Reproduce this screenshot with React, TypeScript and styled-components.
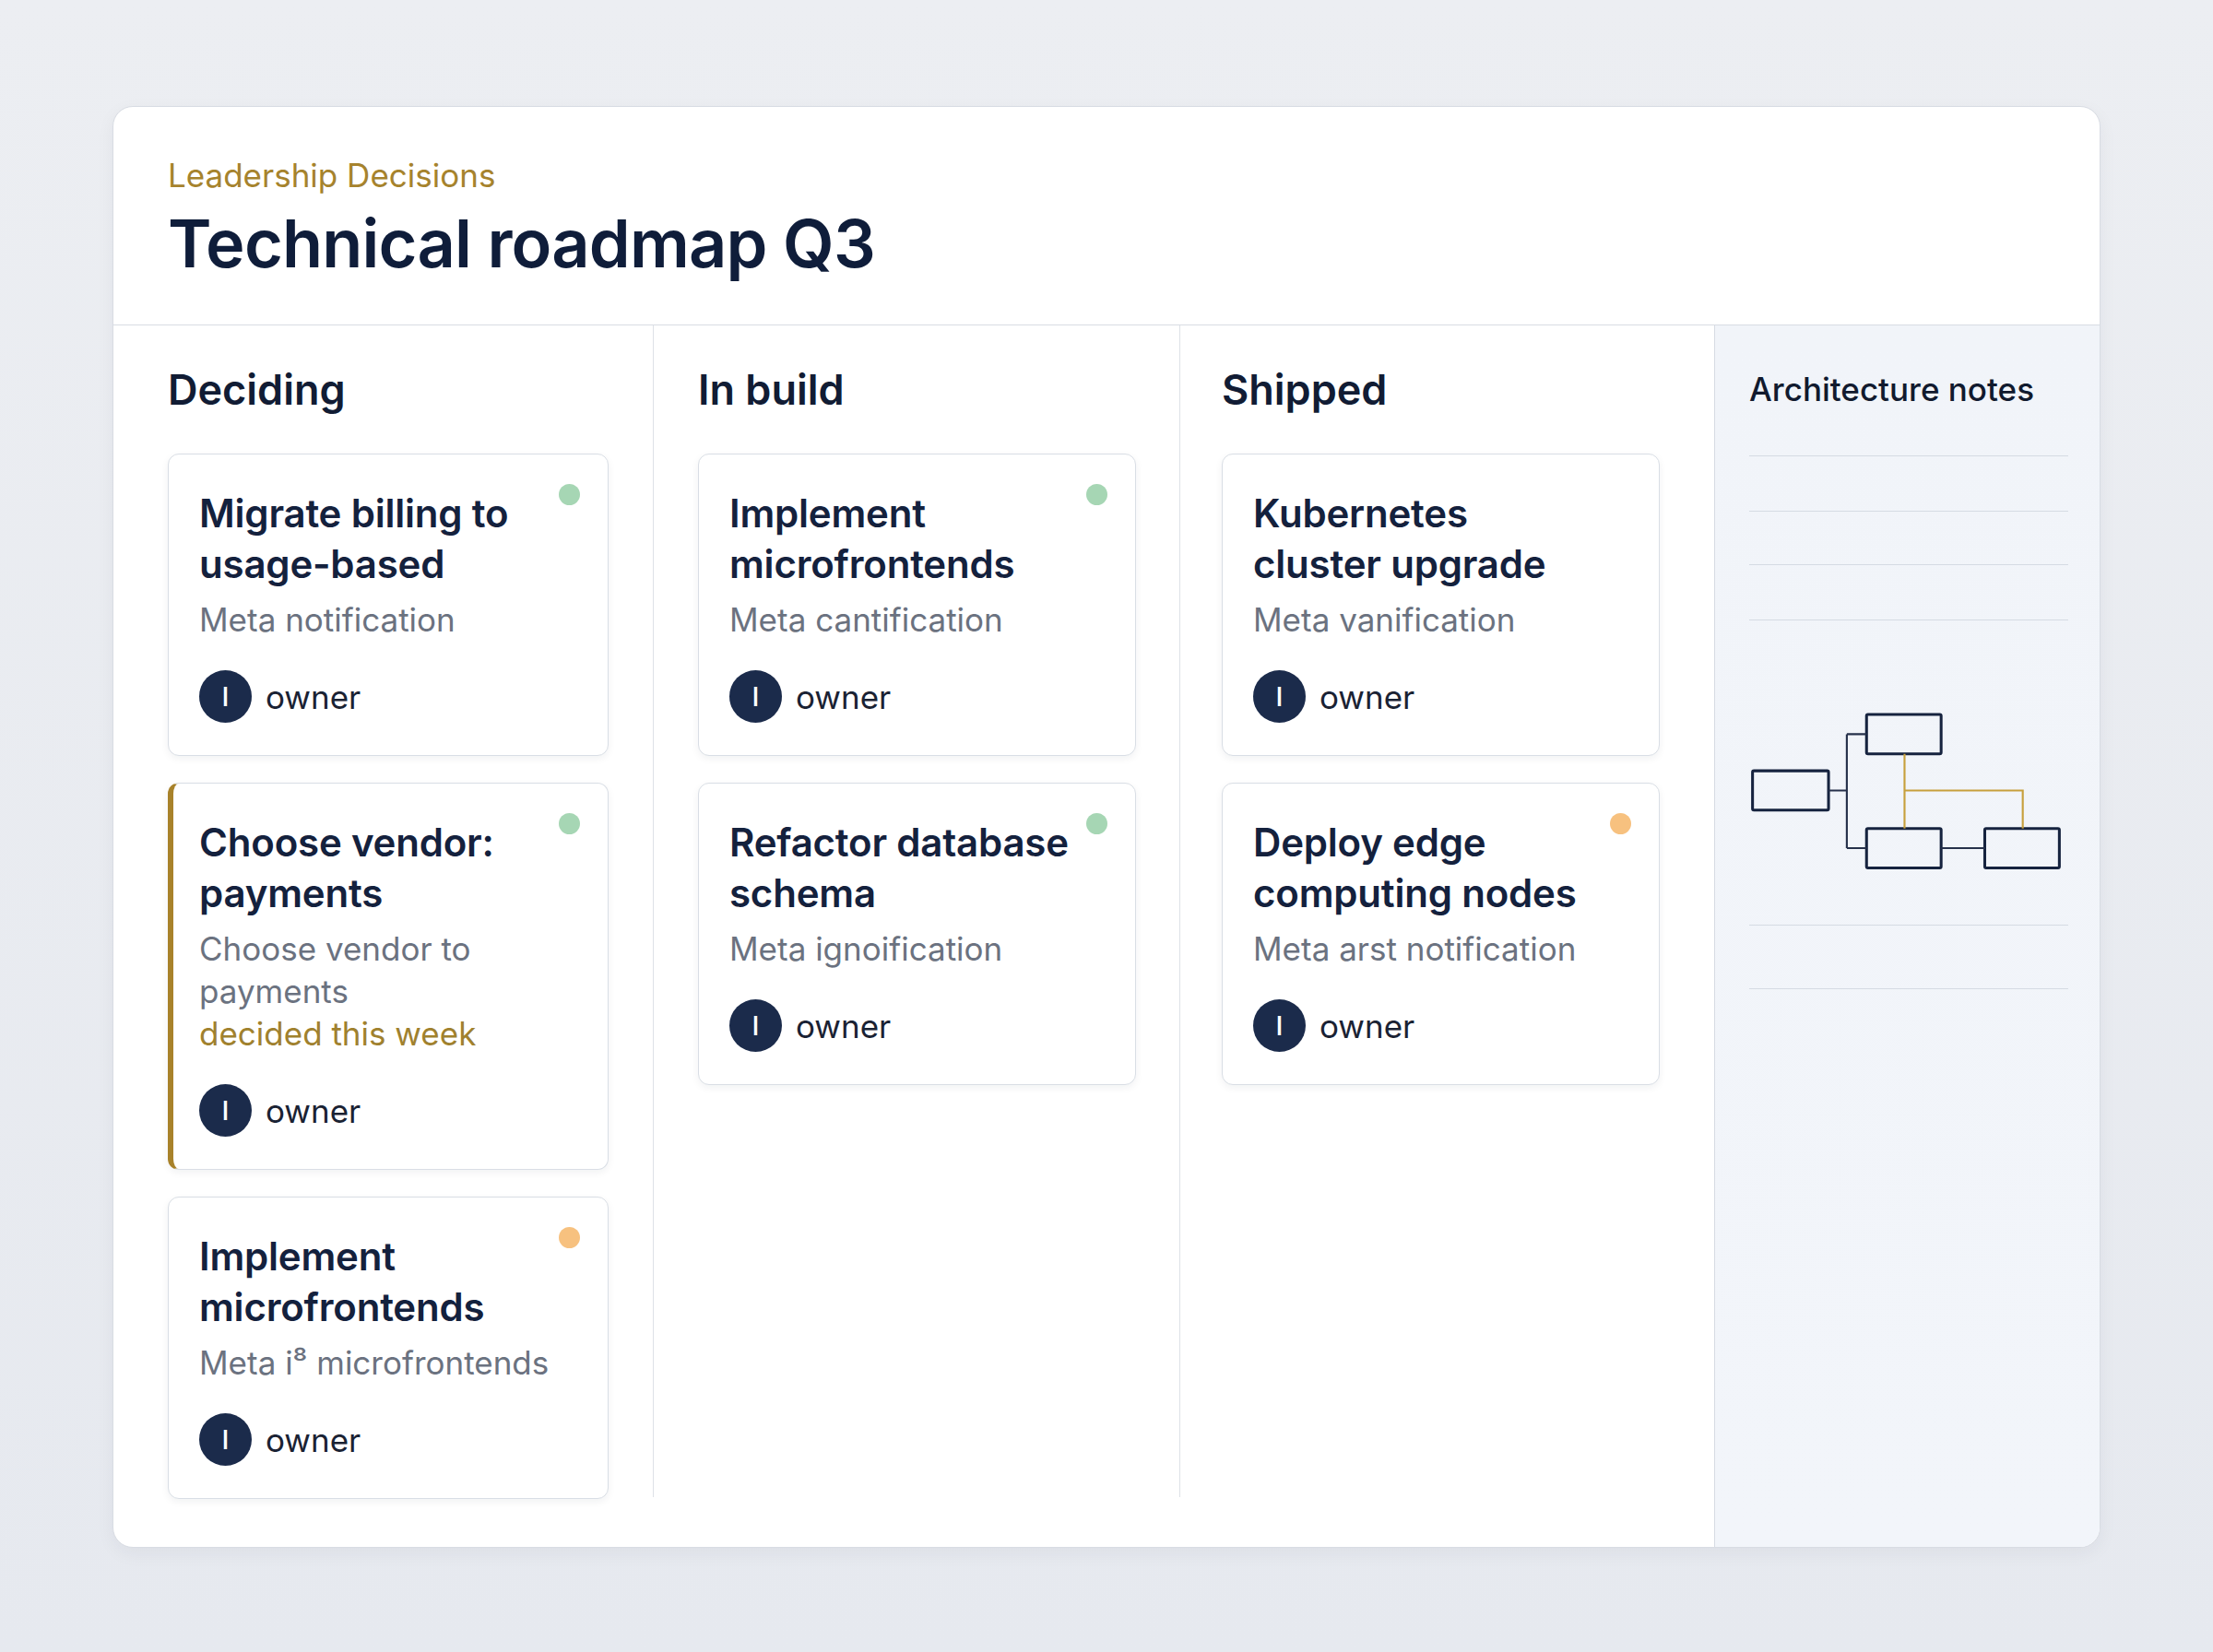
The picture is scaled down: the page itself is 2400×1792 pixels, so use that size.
import React from "react";
import styled, { createGlobalStyle } from "styled-components";

type Dot = "green" | "orange" | "none";

interface CardData {
  title: string;
  meta: string;
  note?: string;
  dot: Dot;
  accent?: boolean;
}

interface ColumnData {
  name: string;
  pl: number;
  pr: number;
  cards: CardData[];
}

const columns: ColumnData[] = [
  {
    name: "Deciding",
    pl: 59,
    pr: 48,
    cards: [
      { title: "Migrate billing to\nusage-based", meta: "Meta notification", dot: "green" },
      {
        title: "Choose vendor:\npayments",
        meta: "Choose vendor to\npayments",
        note: "decided this week",
        dot: "green",
        accent: true,
      },
      { title: "Implement\nmicrofrontends", meta: "Meta i⁸ microfrontends", dot: "orange" },
    ],
  },
  {
    name: "In build",
    pl: 48,
    pr: 47,
    cards: [
      { title: "Implement\nmicrofrontends", meta: "Meta cantification", dot: "green" },
      { title: "Refactor database\nschema", meta: "Meta ignoification", dot: "green" },
    ],
  },
  {
    name: "Shipped",
    pl: 45,
    pr: 59,
    cards: [
      { title: "Kubernetes\ncluster upgrade", meta: "Meta vanification", dot: "none" },
      { title: "Deploy edge\ncomputing nodes", meta: "Meta arst notification", dot: "orange" },
    ],
  },
];

const dotColors: Record<Dot, string> = {
  green: "#a6d6b4",
  orange: "#f7c17f",
  none: "transparent",
};

const GlobalStyle = createGlobalStyle`
  html, body {
    margin: 0;
    padding: 0;
  }
  body {
    background: #e9ecf1;
    font-family: Inter, "Noto Sans", sans-serif;
    -webkit-font-smoothing: antialiased;
  }
`;

const Page = styled.div`
  width: 2400px;
  height: 1792px;
  box-sizing: border-box;
  padding: 115px 122px 113px;
  background: linear-gradient(180deg, #eceef2 0%, #e6e9ef 100%);
`;

const Panel = styled.div`
  height: 100%;
  box-sizing: border-box;
  background: #ffffff;
  border: 1px solid #d8dce3;
  border-radius: 22px;
  overflow: hidden;
  display: flex;
  flex-direction: column;
  box-shadow: 0 6px 20px rgba(30, 40, 60, 0.05);
`;

const Header = styled.header`
  padding: 54px 61px 43px 59px;
  border-bottom: 1px solid #d8dce3;
`;

const Eyebrow = styled.div`
  font-size: 35px;
  line-height: 40px;
  color: #a6832d;
  font-weight: 400;
`;

const Title = styled.h1`
  margin: 9px 0 0;
  font-size: 72px;
  line-height: 90px;
  font-weight: 600;
  letter-spacing: -0.8px;
  color: #0f1d3a;
`;

const Body = styled.div`
  flex: 1;
  display: flex;
  min-height: 0;
`;

const Board = styled.div`
  flex: 1;
  display: grid;
  grid-template-columns: 586px 571px 1fr;
  align-items: start;
`;

const Column = styled.section<{ $pl: number; $pr: number; $last: boolean }>`
  padding: 43px ${(p) => p.$pr}px 0 ${(p) => p.$pl}px;
  height: calc(100% - 54px);
  box-sizing: border-box;
  border-right: ${(p) => (p.$last ? "none" : "1px solid #dde1e7")};
  display: flex;
  flex-direction: column;
  gap: 29px;
`;

const ColumnTitle = styled.h2`
  margin: 0 0 13px;
  font-size: 45px;
  line-height: 54px;
  font-weight: 600;
  color: #111c34;
`;

const Card = styled.article<{ $accent?: boolean }>`
  position: relative;
  background: #ffffff;
  border: 1px solid #d9dee5;
  border-left: ${(p) => (p.$accent ? "6px solid #a8822a" : "1px solid #d9dee5")};
  border-radius: 12px;
  padding: 36px 34px 35px ${(p) => (p.$accent ? "28px" : "33px")};
  box-shadow: 0 3px 8px rgba(20, 30, 50, 0.06);
`;

const StatusDot = styled.span<{ $dot: Dot }>`
  position: absolute;
  top: 32px;
  right: 30px;
  width: 23px;
  height: 23px;
  border-radius: 50%;
  background: ${(p) => dotColors[p.$dot]};
`;

const CardTitle = styled.h3`
  margin: 0;
  font-size: 42px;
  line-height: 55px;
  font-weight: 600;
  letter-spacing: -0.2px;
  color: #14213d;
  white-space: pre-line;
`;

const Meta = styled.p<{ $gold?: boolean }>`
  margin: 0;
  font-size: 35px;
  line-height: 46px;
  color: ${(p) => (p.$gold ? "#a0812e" : "#6b7280")};
  white-space: pre-line;
`;

const MetaBlock = styled.div`
  margin-top: 10px;
`;

const OwnerRow = styled.div`
  margin-top: 32px;
  display: flex;
  align-items: center;
  gap: 15px;
`;

const Avatar = styled.span`
  width: 57px;
  height: 57px;
  border-radius: 50%;
  background: #1b2b4b;
  color: #ffffff;
  display: flex;
  align-items: center;
  justify-content: center;
  font-size: 29px;
  font-weight: 500;
`;

const OwnerName = styled.span`
  font-size: 35px;
  line-height: 46px;
  color: #1a2233;
`;

const Notes = styled.aside`
  width: 418px;
  flex: none;
  box-sizing: border-box;
  background: linear-gradient(180deg, #f1f4f9 0%, #f2f5fa 100%);
  border-left: 1px solid #d6dbe3;
  padding: 47px 34px 0 37px;
  display: flex;
  flex-direction: column;
`;

const NotesTitle = styled.h2`
  margin: 0;
  font-size: 35px;
  line-height: 44px;
  font-weight: 500;
  color: #111a2e;
`;

const Rule = styled.div<{ $gap: number }>`
  margin-top: ${(p) => p.$gap}px;
  height: 1px;
  background: #d5dbe3;
`;

const DiagramWrap = styled.div`
  margin-top: 99px;
  height: 174px;
`;

const Diagram = () => (
  <svg width="340" height="174" viewBox="0 0 222 114" fill="none">
    <g stroke="#16233f" strokeWidth="2">
      <rect x="2" y="42" width="54" height="28" rx="1" />
      <rect x="83" y="2" width="53" height="28" rx="1" />
      <rect x="83" y="83" width="53" height="28" rx="1" />
      <rect x="167" y="83" width="53" height="28" rx="1" />
    </g>
    <g stroke="#26314b" strokeWidth="1.4">
      <path d="M56 56H69M69 16V97M69 16H83M69 97H83M136 97H167" />
    </g>
    <g stroke="#c7a03c" strokeWidth="1.4">
      <path d="M110 30V83M110 56H194V83" />
    </g>
  </svg>
);

const TaskCard = ({ card }: { card: CardData }) => (
  <Card $accent={card.accent}>
    {card.dot !== "none" && <StatusDot $dot={card.dot} />}
    <CardTitle>{card.title}</CardTitle>
    <MetaBlock>
      <Meta>{card.meta}</Meta>
      {card.note && <Meta $gold>{card.note}</Meta>}
    </MetaBlock>
    <OwnerRow>
      <Avatar>I</Avatar>
      <OwnerName>owner</OwnerName>
    </OwnerRow>
  </Card>
);

const App = () => {
  return (
    <Page>
      <GlobalStyle />
      <Panel>
        <Header>
          <Eyebrow>Leadership Decisions</Eyebrow>
          <Title>Technical roadmap Q3</Title>
        </Header>
        <Body>
          <Board>
            {columns.map((col, i) => (
              <Column key={col.name} $pl={col.pl} $pr={col.pr} $last={i === columns.length - 1}>
                <ColumnTitle>{col.name}</ColumnTitle>
                {col.cards.map((card, j) => (
                  <TaskCard key={j} card={card} />
                ))}
              </Column>
            ))}
          </Board>
          <Notes>
            <NotesTitle>Architecture notes</NotesTitle>
            <Rule $gap={50} />
            <Rule $gap={59} />
            <Rule $gap={57} />
            <Rule $gap={59} />
            <DiagramWrap>
              <Diagram />
            </DiagramWrap>
            <Rule $gap={57} />
            <Rule $gap={68} />
          </Notes>
        </Body>
      </Panel>
    </Page>
  );
};

export default App;
